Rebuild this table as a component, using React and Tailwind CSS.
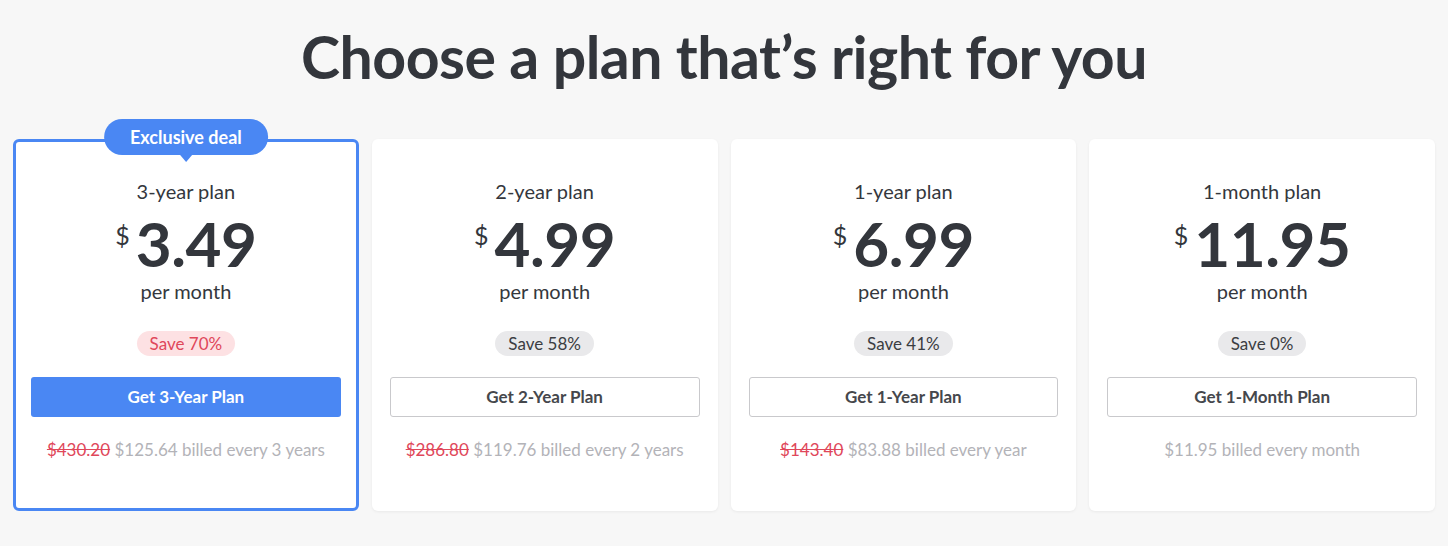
import React from "react";

const plans = [
  {
    name: "3-year plan",
    price: "3.49",
    save: "Save 70%",
    cta: "Get 3-Year Plan",
    old: "$430.20",
    billed: "$125.64 billed every 3 years",
    featured: true,
  },
  {
    name: "2-year plan",
    price: "4.99",
    save: "Save 58%",
    cta: "Get 2-Year Plan",
    old: "$286.80",
    billed: "$119.76 billed every 2 years",
  },
  {
    name: "1-year plan",
    price: "6.99",
    save: "Save 41%",
    cta: "Get 1-Year Plan",
    old: "$143.40",
    billed: "$83.88 billed every year",
  },
  {
    name: "1-month plan",
    price: "11.95",
    save: "Save 0%",
    cta: "Get 1-Month Plan",
    old: null,
    billed: "$11.95 billed every month",
  },
];

const PlanCard = ({ plan }) => {
  const featured = plan.featured;
  return (
    <div
      className={
        featured
          ? "relative flex flex-col items-center rounded-md border-[3px] border-[#4a87f3] bg-white px-[15px] pt-[37px] pb-[46px]"
          : "relative flex flex-col items-center rounded-md border-[3px] border-transparent bg-white px-[15px] pt-[37px] pb-[46px] shadow-[0_1px_3px_rgba(0,0,0,0.06)]"
      }
    >
      {featured && (
        <div className="absolute -top-[23px] left-1/2 -translate-x-1/2">
          <div className="rounded-full bg-[#4a87f3] px-[26px] h-[36px] flex items-center text-[18px] font-bold text-white whitespace-nowrap">
            Exclusive deal
          </div>
          <div className="mx-auto h-0 w-0 border-x-[6px] border-t-[7px] border-x-transparent border-t-[#4a87f3]" />
        </div>
      )}

      {/* Plan name */}
      <div className="text-[20px] leading-6 text-[#34373d]">{plan.name}</div>

      {/* Price */}
      <div className="mt-[8px] flex items-start text-[#33363c]">
        <span className="mt-[12px] mr-[6px] text-[25px] leading-none font-normal">$</span>
        <span className="text-[62px] leading-[64px] font-bold tracking-[-0.5px]">
          {plan.price}
        </span>
      </div>

      <div className="mt-[4px] text-[20px] leading-6 text-[#34373d]">per month</div>

      {/* Save badge */}
      <div
        className={
          featured
            ? "mt-[28px] rounded-full bg-[#fde1e3] px-[13px] h-[25px] flex items-center text-[17px] text-[#e0475a]"
            : "mt-[28px] rounded-full bg-[#e9e9eb] px-[13px] h-[25px] flex items-center text-[17px] text-[#3b3d42]"
        }
      >
        {plan.save}
      </div>

      {/* CTA */}
      <button
        className={
          featured
            ? "mt-[21px] h-[40px] w-full rounded-[3px] bg-[#4a87f3] text-[17px] font-bold text-white"
            : "mt-[21px] h-[40px] w-full rounded-[3px] border border-[#c9c9cc] bg-white text-[17px] font-bold text-[#45474c]"
        }
      >
        {plan.cta}
      </button>

      {/* Billing line */}
      <div className="mt-[21px] text-[17px] leading-6 text-[#b3b3b8]">
        {plan.old && (
          <span className="text-[#e0475a] line-through">{plan.old}</span>
        )}
        {plan.old && " "}
        {plan.billed}
      </div>
    </div>
  );
};

export default function App() {
  return (
    <div
      className="min-h-[546px] w-full bg-[#f7f7f7] px-[13px] pt-[22px]"
      style={{ fontFamily: "Lato, 'Noto Sans', sans-serif" }}
    >
      <h1 className="text-center text-[59px] leading-[70px] font-bold text-[#33363c] tracking-[-0.5px]">
        Choose a plan that’s right for you
      </h1>

      <div className="mt-[47px] grid grid-cols-4 gap-[13px]">
        {plans.map((plan) => (
          <PlanCard key={plan.name} plan={plan} />
        ))}
      </div>
    </div>
  );
}
